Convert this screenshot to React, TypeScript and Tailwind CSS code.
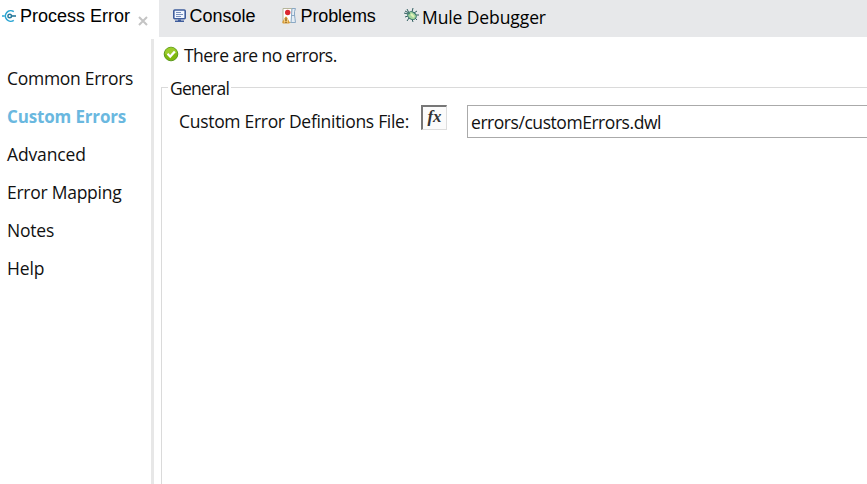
import React from "react";

const ui = "font-['Open_Sans','Noto_Sans',sans-serif]";
const arial = "font-['Liberation_Sans',sans-serif] text-[18px] leading-5";

const sections = [
  { label: "Common Errors", tracking: "pb-[2px] tracking-[-0.28px]" },
  { label: "Custom Errors", tracking: "text-[17px] tracking-[-0.15px]", active: true },
  { label: "Advanced", tracking: "pb-[2px] tracking-[-0.15px]" },
  { label: "Error Mapping", tracking: "pb-[2px] tracking-[-0.26px]" },
  { label: "Notes", tracking: "pb-[2px] tracking-[-0.2px]" },
  { label: "Help", tracking: "pb-[2px] tracking-[-0.15px]" },
];

function FlowIcon() {
  return (
    <svg className="mt-[9px] h-[14px] w-[15px] shrink-0" viewBox="0 0 15 14" fill="none" stroke="#2aa5d3" strokeWidth="1.6">
      <path d="M11.8 2.7A5.3 5.3 0 1 0 11.8 11.3M0 7H2.5" />
      <circle cx="7.7" cy="7" r="1.8" stroke="#27799b" strokeWidth="1.4" />
      <path d="M10 7h4" stroke="#27799b" />
    </svg>
  );
}

function ConsoleIcon() {
  return (
    <svg className="mt-[9px] h-[14px] w-[14px] shrink-0" viewBox="0 0 14 14">
      <rect x=".8" y="1" width="11.4" height="8.8" rx="1" fill="#f1f6ff" stroke="#3e5c9c" strokeWidth="1.6" />
      <path d="M3 3.5h5M3 5.5h7M3 7.5h5" stroke="#7890be" />
      <path d="M5 10.5h3v1h3v1.5H2v-1.5h3z" fill="#3e5c9c" />
    </svg>
  );
}

function ProblemsIcon() {
  return (
    <svg className="mt-2 h-4 w-[15px] shrink-0" viewBox="0 0 15 16">
      <path d="M1 .5h9v14H1z" fill="#fff" stroke="#b5b69b" />
      <path d="M10 .5h3.5Q12 3.5 12.5 7t1 7.5H9z" fill="#e5edf5" stroke="#8aa8c5" />
      <path d="M10 7.5h3" stroke="#8aa8c5" />
      <circle cx="5.7" cy="4.5" r="2.7" fill="#db2731" />
      <path d="M3.2 9Q4 8.2 4.8 9L7.9 14.5Q7.8 15.5 6.8 15.5H1.2Q0 15.3.3 14z" fill="#d99d3a" />
      <path d="M2.8 11v3.5M5.2 11v3.5" stroke="#ffe5a5" />
      <path d="M4 10.5v2.5M4 14v1" stroke="#684a22" />
    </svg>
  );
}

function BugIcon() {
  return (
    <svg className="mt-2 h-[15px] w-[15px] shrink-0" viewBox="0 0 15 15">
      <path d="M5 5 3 1M8 4 9 0M10 5 13 3M4 6 0 5M4 8 1 9M5 10 3 13M8 11 9 14M11 10l2 2M11 7h4M5 5 1 3" stroke="#315f60" />
      <ellipse cx="8" cy="7.7" rx="4.5" ry="3.6" transform="rotate(35 8 7.7)" fill="#a5d69e" stroke="#34706a" />
      <circle cx="4.8" cy="5.2" r="1.2" fill="#4b8470" />
      <path d="m7 6 3 3" stroke="#e2f2b9" strokeWidth="2" />
    </svg>
  );
}

export default function App() {
  return (
    <div className={`flex h-[484px] w-[867px] flex-col overflow-hidden bg-white text-[17.5px] text-[#111] ${ui}`}>
      <header className="flex h-[37px] shrink-0 bg-[#e7e8ea] text-black">
        <div className="flex w-[159px] shrink-0 bg-white pl-[2px]">
          <FlowIcon />
          <span className={`mt-[6px] ml-[3px] w-[112px] whitespace-nowrap ${arial}`}>Process Error</span>
          <svg className="mt-4 ml-[6px] h-[10px] w-[10px]" viewBox="0 0 10 10" stroke="#c4c4c4" strokeWidth="2">
            <path d="m1 1 8 8M9 1 1 9" />
          </svg>
        </div>
        <div className="flex w-[109px] shrink-0 pl-[14px]">
          <ConsoleIcon />
          <span className={`mt-[6px] ml-[2.5px] ${arial}`}>Console</span>
        </div>
        <div className="flex w-[122px] shrink-0 pl-[14px]">
          <ProblemsIcon />
          <span className={`mt-[6px] ml-[3.5px] tracking-[-0.1px] ${arial}`}>Problems</span>
        </div>
        <div className="flex pl-[14px]">
          <BugIcon />
          <span className="mt-[5px] ml-[3px] leading-6 whitespace-nowrap tracking-[-0.1px]">Mule Debugger</span>
        </div>
      </header>
      <div className="flex min-h-0 flex-1">
        <aside className="flex w-[151px] shrink-0 flex-col pt-[23px] pl-[7px]">
          {sections.map((s) => (
            <div key={s.label} className={`flex h-[38px] items-center whitespace-nowrap ${s.tracking} ${s.active ? "font-bold text-[#6ab8df]" : ""}`}>
              <span>{s.label}</span>
            </div>
          ))}
        </aside>
        <div className="mt-[2px] w-[3px] shrink-0 bg-[#e7e7e7]" />
        <main className="flex min-w-0 flex-1 flex-col pl-[7px]">
          <div className="flex h-[38px] shrink-0 pl-[2px]">
            <svg className="mt-[9px] h-4 w-4" viewBox="0 0 16 16">
              <circle cx="8" cy="8" r="6.8" fill="#7fb80e" stroke="#5c9a1d" />
              <path d="M2 8A6 6 0 0 1 14 7Q8 9 2 8" fill="#9ccc2b" />
              <path d="m4.5 7.8 2.7 2.8L11.8 5.5" fill="none" stroke="#fff" strokeWidth="2.2" />
            </svg>
            <span className="mt-[6px] ml-[5px] leading-6 tracking-[-0.54px]">There are no errors.</span>
          </div>
          <fieldset className="mr-[-2px] flex-1 border border-b-0 border-[#dadada] px-0 pl-[17px]">
            <legend className="-ml-[11px] h-6 px-[2px] leading-[26px] tracking-[-0.75px]">General</legend>
            <div className="flex pt-[6px]">
              <label className="mt-[4px] w-[242px] shrink-0 leading-6 whitespace-nowrap tracking-[-0.3px]">Custom Error Definitions File:</label>
              <button className="flex h-[25px] w-[26px] shrink-0 items-center justify-center border-t-2 border-l-2 border-r border-b border-t-[#777] border-r-[#ddd] border-b-[#ddd] border-l-[#777] bg-[#fbfbfb] pb-[2px] font-['Liberation_Serif',serif] text-[17px] leading-4 font-bold text-[#333] italic">fx</button>
              <div className="ml-5 h-[33px] flex-1 border border-[#aaa] pt-[4px] pl-[3px] leading-6 tracking-[-0.45px]">errors/customErrors.dwl</div>
            </div>
          </fieldset>
        </main>
      </div>
    </div>
  );
}
